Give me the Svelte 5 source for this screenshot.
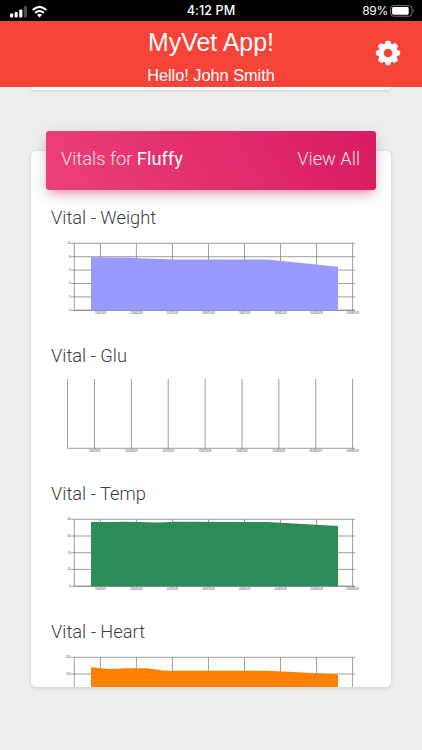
<script lang="ts">
	interface Vital {
		name: string
		color: string
		left: number
		top: number
		ticks: { label: string; y: number }[]
		area: string
		clipped?: boolean
	}

	const dates = ['7/06/2019', '21/06/2019', '5/07/2019', '19/07/2019', '2/08/2019', '16/08/2019', '30/08/2019', '13/09/2019']

	const vitals: Vital[] = [
		{
			name: 'Weight',
			color: '#9999ff',
			left: 23.3,
			top: 8.3,
			ticks: [
				{ label: '10', y: 8.3 },
				{ label: '8', y: 21.7 },
				{ label: '6', y: 35.1 },
				{ label: '4', y: 48.5 },
				{ label: '2', y: 61.9 },
				{ label: '0', y: 75.3 },
			],
			area: '40,22 58,22.5 76,22.6 94,23.5 124,24.5 216,24.5 287,31.8 287,75.3 40,75.3',
		},
		{
			name: 'Glu',
			color: 'none',
			left: 16.5,
			top: 6,
			ticks: [],
			area: '',
		},
		{
			name: 'Temp',
			color: '#2e8b57',
			left: 23.3,
			top: 8.3,
			ticks: [
				{ label: '40', y: 8.3 },
				{ label: '30', y: 25 },
				{ label: '20', y: 41.7 },
				{ label: '10', y: 58.4 },
				{ label: '0', y: 75.2 },
			],
			area: '40,11 58,11.1 76,10.8 107,11.4 124,10.8 216,10.9 287,15 287,75.2 40,75.2',
		},
		{
			name: 'Heart',
			color: '#ff8000',
			left: 23.3,
			top: 8.3,
			ticks: [
				{ label: '200', y: 8.3 },
				{ label: '150', y: 25 },
			],
			area: '40,18.3 58,20 76,19.2 96,19.3 114,21.8 216,21.8 287,25.2 287,75.2 40,75.2',
			clipped: true,
		},
	]

	// the last date always sits on the right edge of the plot
	function dateX(vital: Vital, i: number): number {
		const step = vital.ticks.length ? 36.03 : 36.87
		return 301.6 - (dates.length - 1 - i) * step
	}

	const teeth = [0, 45, 90, 135, 180, 225, 270, 315]
</script>

<div class="app">
	<div class="status">
		<svg class="signal" width="40" height="14" viewBox="0 0 40 14">
			<g fill="#fff">
				<rect x="0" y="8.6" width="3.2" height="3.8" rx=".8" />
				<rect x="4.6" y="7" width="3.2" height="5.4" rx=".8" />
				<rect x="9.2" y="4.6" width="3.2" height="7.8" rx=".8" />
				<rect x="13.8" y="1" width="3.2" height="11.4" rx=".8" opacity=".3" />
				<path d="M29.5 12.4 L27 9.8 Q29.5 7.9 32 9.8 Z" />
			</g>
			<g fill="none" stroke="#fff" stroke-width="2.1">
				<path d="M25.1 7.9 Q29.5 4.1 33.9 7.9" />
				<path d="M22.7 5.1 Q29.5 -1.3 36.3 5.1" />
			</g>
		</svg>
		<span class="time">4:12 PM</span>
		<span class="power">
			89%
			<svg width="26" height="12" viewBox="0 0 26 12">
				<rect x=".6" y=".6" width="21.4" height="10.6" rx="2.8" fill="none" stroke="#777" />
				<rect x="2.1" y="2.1" width="16.6" height="7.6" rx="1.4" fill="#fff" />
				<path d="M23.3 4 Q25.2 5.9 23.3 7.8 Z" fill="#777" />
			</svg>
		</span>
	</div>

	<header>
		<h1>MyVet App!</h1>
		<p>Hello! John Smith</p>
		<button aria-label="Settings">
			<svg width="26" height="26" viewBox="-13 -13 26 26">
				<g fill="#fff">
					{#each teeth as angle}
						<path d="M-3.5 -8 L-2.3 -11.5 Q-2 -12.2 -1.3 -12.2 H1.3 Q2 -12.2 2.3 -11.5 L3.5 -8 Z" transform="rotate({angle})" />
					{/each}
				</g>
				<circle r="7" fill="none" stroke="#fff" stroke-width="5.4" />
			</svg>
		</button>
	</header>

	<main>
		<div class="previous"></div>

		<section class="card">
			<div class="banner">
				<span>Vitals for <b>Fluffy</b></span>
				<span>View All</span>
			</div>
			<div class="body">
				{#each vitals as vital}
					<div class="vital">
						<h2>Vital - {vital.name}</h2>
						<svg width="320" height="86" viewBox="0 0 320 86">
							<g stroke="#777" stroke-width=".7">
								{#each vital.ticks as tick}
									<line x1="20" x2="304" y1={tick.y} y2={tick.y} />
								{/each}
								<line x1={vital.left} x2={vital.left} y1={vital.top} y2="75.3" />
								{#each dates as _, i}
									<line x1={dateX(vital, i)} x2={dateX(vital, i)} y1={vital.top} y2="76" />
								{/each}
								<line x1={vital.left} x2="304" y1="75.3" y2="75.3" />
							</g>
							<polygon points={vital.area} fill={vital.color} />
							<g class="labels">
								{#each vital.ticks as tick}
									<text x="19.5" y={tick.y + 0.9} text-anchor="end">{tick.label}</text>
								{/each}
								{#if !vital.clipped}
									{#each dates as date, i}
										<text x={dateX(vital, i)} y="78.6" text-anchor="middle" textLength={date.length * 1.25}>{date}</text>
									{/each}
								{/if}
							</g>
						</svg>
					</div>
				{/each}
			</div>
		</section>
	</main>
</div>

<style>
	:global(body) {
		margin: 0;
		background: #eee;
	}
	.app {
		height: 750px;
		overflow: hidden;
		background: #eee;
		font-family: Roboto, sans-serif;
	}
	.status {
		display: grid;
		grid-template-columns: 1fr auto 1fr;
		align-items: center;
		height: 21px;
		padding: 0 6px 0 10px;
		background: #000;
		color: #fff;
		font: 12px/21px Inter, sans-serif;
	}
	.signal {
		margin-top: 3px;
	}
	.time {
		margin-left: -4px;
		font-weight: 500;
		font-size: 12.6px;
		letter-spacing: 0.1px;
	}
	.power {
		display: flex;
		justify-content: flex-end;
		align-items: center;
		gap: 2px;
		letter-spacing: -0.3px;
	}
	header {
		position: relative;
		height: 66px;
		background: #f54337;
		color: #fff;
		font-family: 'Liberation Sans', sans-serif;
		text-align: center;
	}
	h1 {
		margin: 0;
		padding-top: 6px;
		font-size: 24.9px;
		line-height: 30px;
		font-weight: 400;
	}
	header p {
		margin: 0;
		padding-top: 8px;
		font-size: 16.3px;
		line-height: 20px;
	}
	button {
		position: absolute;
		top: 19px;
		right: 21px;
		padding: 0;
		border: none;
		background: none;
	}
	button svg {
		display: block;
	}
	main {
		padding: 0 31px;
	}
	.previous {
		height: 3px;
		background: #fff;
		border-radius: 0 0 5px 5px;
		box-shadow: 0 1px 3px rgba(0, 0, 0, 0.14);
	}
	.card {
		height: 536px;
		margin-top: 61px;
		background: #fff;
		border-radius: 5px;
		box-shadow: 0 1px 4px rgba(0, 0, 0, 0.14);
	}
	.banner {
		position: relative;
		top: -20px;
		display: flex;
		justify-content: space-between;
		box-sizing: border-box;
		height: 59px;
		margin: 0 15px -20px;
		padding: 0 16px 0 15px;
		border-radius: 3px;
		background: linear-gradient(60deg, #ec407a, #d81b60);
		box-shadow: 0 4px 18px rgba(0, 0, 0, 0.12), 0 6px 10px -4px rgba(233, 30, 99, 0.45);
		color: #fde0ea;
		font-size: 18.3px;
		line-height: 56px;
		font-weight: 300;
	}
	b {
		color: #fff;
		font-weight: 400;
	}
	.body {
		height: 497px;
		overflow: hidden;
		border-radius: 0 0 5px 5px;
	}
	.vital {
		height: 138px;
		padding-left: 20px;
	}
	h2 {
		margin: 0;
		padding-top: 13px;
		font-size: 18.3px;
		line-height: 29px;
		height: 32px;
		color: #3c4043;
		font-weight: 300;
	}
	.vital svg {
		display: block;
	}
	.labels {
		fill: #444;
		font: 2.7px 'Liberation Sans', sans-serif;
	}
</style>
